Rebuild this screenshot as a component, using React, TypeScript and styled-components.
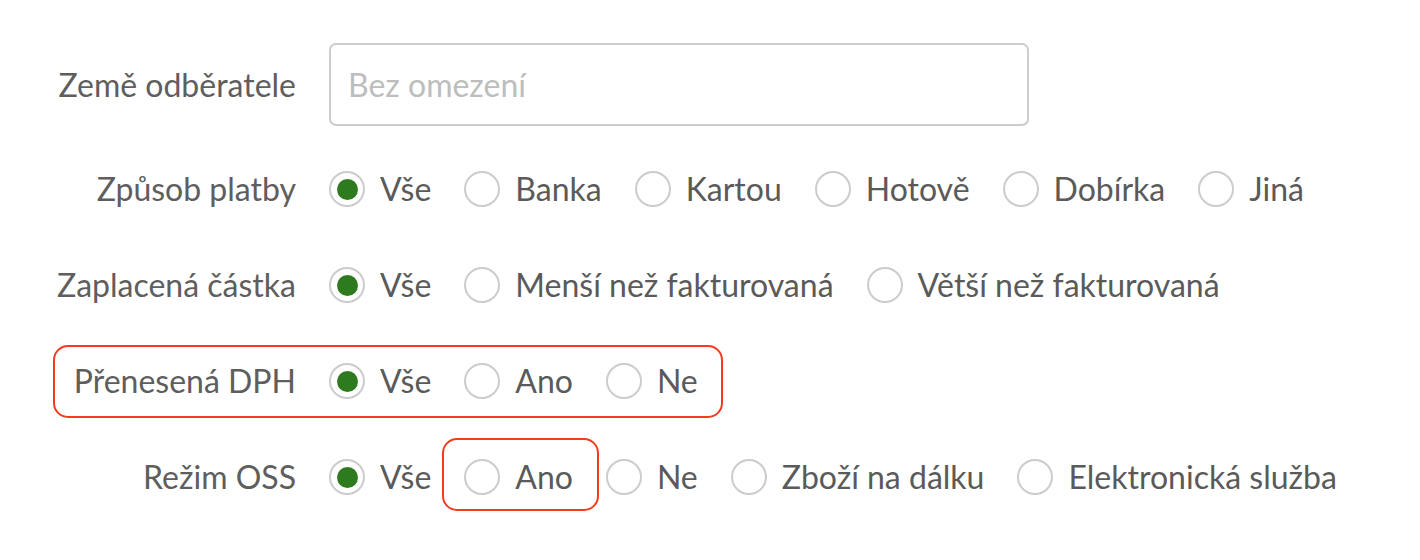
import React from "react";
import styled, { createGlobalStyle, css } from "styled-components";

const GlobalStyle = createGlobalStyle`
  html, body {
    margin: 0;
    padding: 0;
    background: #ffffff;
  }
  body {
    font-family: Lato, "Open Sans", "Liberation Sans", sans-serif;
    color: #5e5e5e;
    -webkit-font-smoothing: antialiased;
  }
  * { box-sizing: border-box; }
`;

const Form = styled.div`
  display: flex;
  flex-direction: column;
  align-items: flex-start;
  padding: 43px 0 63px 40px;
`;

const Row = styled.div<{ $top: number; $highlight?: boolean }>`
  position: relative;
  display: grid;
  grid-template-columns: 256px auto;
  column-gap: 33px;
  align-items: center;
  margin-top: ${(p) => p.$top}px;
  ${(p) =>
    p.$highlight &&
    css`
      &::after {
        content: "";
        position: absolute;
        top: -18px;
        bottom: -19px;
        left: 13px;
        right: -25px;
        border: 2px solid #f43a1f;
        border-radius: 15px;
        pointer-events: none;
      }
    `}
`;

const Label = styled.div`
  text-align: right;
  font-size: 32px;
  line-height: 36px;
  color: #5e5e5e;
  white-space: nowrap;
`;

const TextInput = styled.input`
  width: 700px;
  height: 83px;
  border: 2px solid #cccccc;
  border-radius: 7px;
  padding: 0 17px;
  font-family: inherit;
  font-size: 32px;
  color: #555555;
  outline: none;
  background: #fff;
  &::placeholder {
    color: #bdbdbd;
  }
`;

const Options = styled.div`
  display: flex;
  align-items: center;
  gap: 33px;
`;

const Option = styled.label<{ $highlight?: boolean }>`
  position: relative;
  display: flex;
  align-items: center;
  gap: 15px;
  font-size: 32px;
  line-height: 36px;
  color: #5a5a5a;
  white-space: nowrap;
  cursor: pointer;
  ${(p) =>
    p.$highlight &&
    css`
      &::after {
        content: "";
        position: absolute;
        top: -21px;
        bottom: -16px;
        left: -22px;
        right: -26px;
        border: 2px solid #f43a1f;
        border-radius: 15px;
        pointer-events: none;
      }
    `}
`;

const RadioCircle = styled.span<{ $checked?: boolean }>`
  display: inline-flex;
  align-items: center;
  justify-content: center;
  width: 36px;
  height: 36px;
  flex: 0 0 36px;
  border-radius: 50%;
  border: 2px solid #cccccc;
  background: #fff;
  &::before {
    content: "";
    width: 21px;
    height: 21px;
    border-radius: 50%;
    background: ${(p) => (p.$checked ? "#2d7a1f" : "transparent")};
  }
`;

type Opt = { text: string; checked?: boolean; highlight?: boolean };

const RadioGroup = ({ options }: { options: Opt[] }) => (
  <Options>
    {options.map((o) => (
      <Option key={o.text} $highlight={o.highlight}>
        <RadioCircle $checked={o.checked} />
        {o.text}
      </Option>
    ))}
  </Options>
);

export default function App() {
  return (
    <>
      <GlobalStyle />
      <Form>
        <Row $top={0}>
          <Label>Země odběratele</Label>
          <TextInput placeholder="Bez omezení" />
        </Row>
        <Row $top={45}>
          <Label>Způsob platby</Label>
          <RadioGroup
            options={[
              { text: "Vše", checked: true },
              { text: "Banka" },
              { text: "Kartou" },
              { text: "Hotově" },
              { text: "Dobírka" },
              { text: "Jiná" },
            ]}
          />
        </Row>
        <Row $top={60}>
          <Label>Zaplacená částka</Label>
          <RadioGroup
            options={[
              { text: "Vše", checked: true },
              { text: "Menší než fakturovaná" },
              { text: "Větší než fakturovaná" },
            ]}
          />
        </Row>
        <Row $top={60} $highlight>
          <Label>Přenesená DPH</Label>
          <RadioGroup
            options={[
              { text: "Vše", checked: true },
              { text: "Ano" },
              { text: "Ne" },
            ]}
          />
        </Row>
        <Row $top={60}>
          <Label>Režim OSS</Label>
          <RadioGroup
            options={[
              { text: "Vše", checked: true },
              { text: "Ano", highlight: true },
              { text: "Ne" },
              { text: "Zboží na dálku" },
              { text: "Elektronická služba" },
            ]}
          />
        </Row>
      </Form>
    </>
  );
}
